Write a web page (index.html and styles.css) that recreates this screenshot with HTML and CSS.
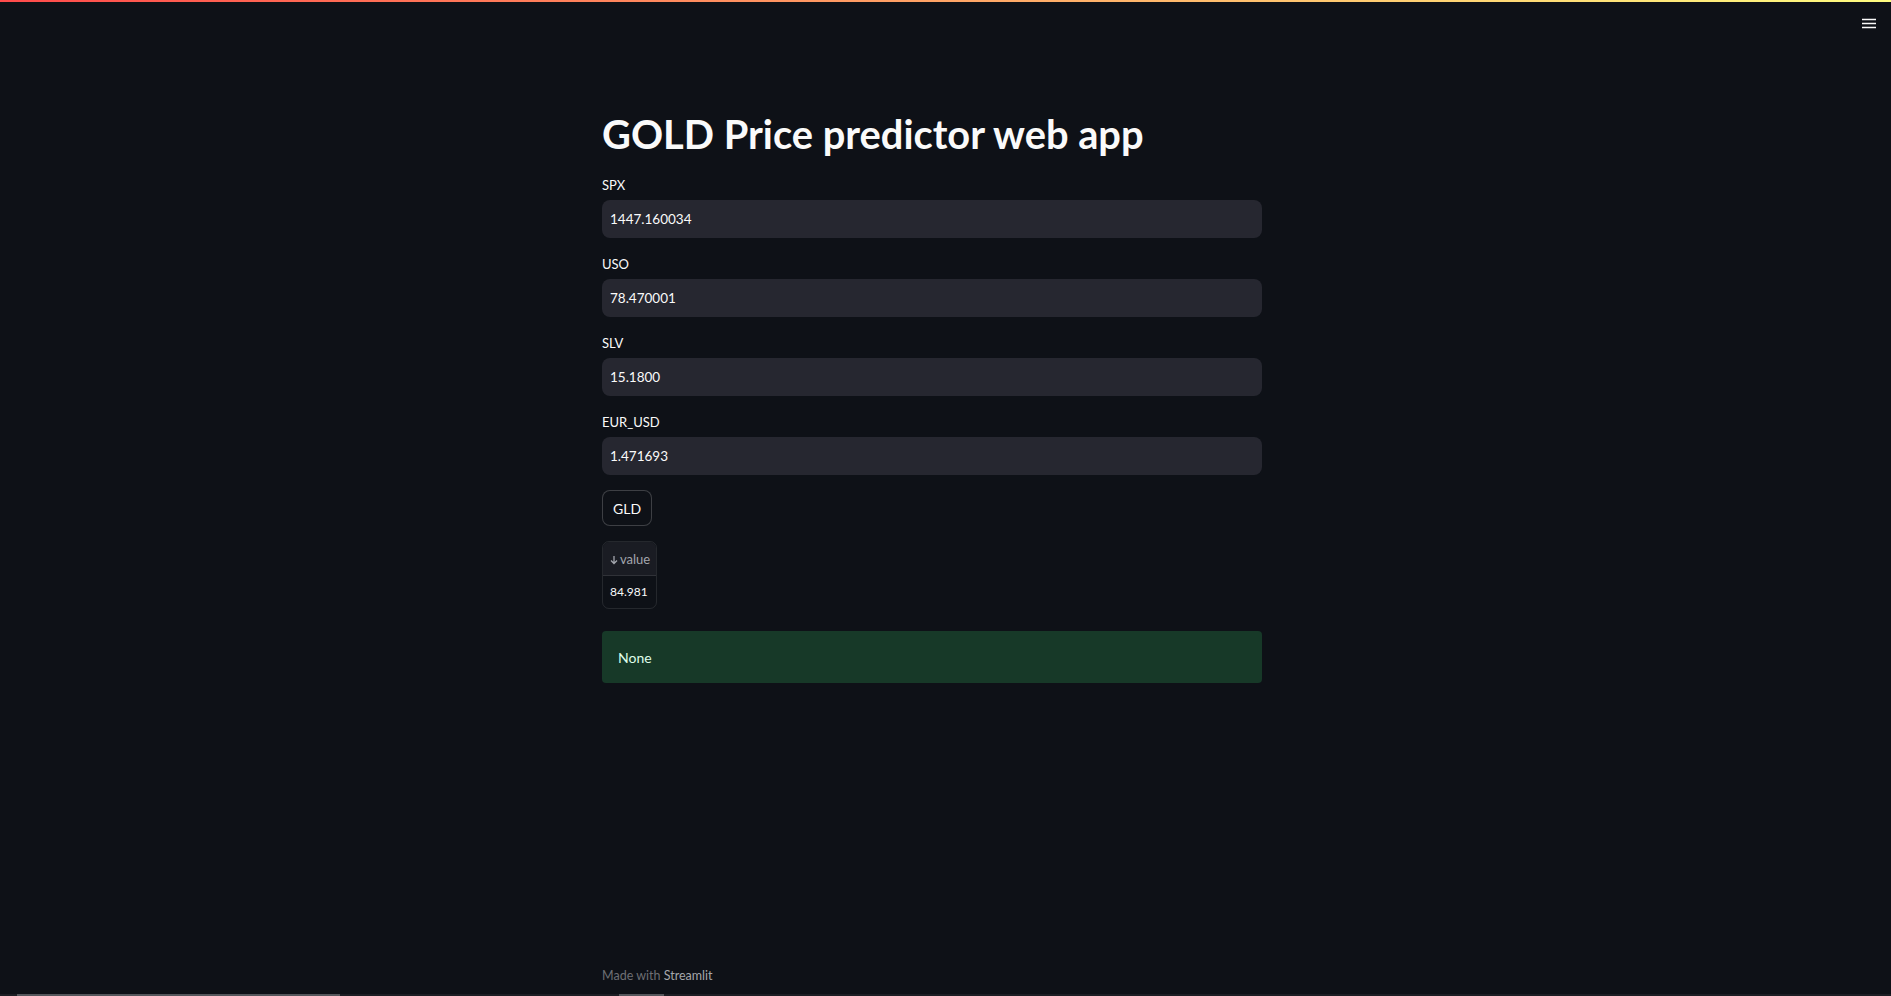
FILE: index.html
```html
<!DOCTYPE html>
<html lang="en">
<head>
<meta charset="utf-8">
<title>GOLD Price predictor web app</title>
<link rel="stylesheet" href="styles.css">
</head>
<body>
<div class="app">
  <div class="decoration"></div>
  <header class="topbar">
    <button class="menu-btn" aria-label="Menu">
      <svg width="16" height="16" viewBox="0 0 16 16"><path d="M1 4.5h14M1 8.5h14M1 12.5h14" stroke="#fafafa" stroke-width="1.6" fill="none"/></svg>
    </button>
  </header>
  <main class="main">
    <h1 class="title">GOLD Price predictor web app</h1>
    <div class="field">
      <label class="field-label">SPX</label>
      <input class="field-input" type="text" value="1447.160034">
    </div>
    <div class="field">
      <label class="field-label">USO</label>
      <input class="field-input" type="text" value="78.470001">
    </div>
    <div class="field">
      <label class="field-label">SLV</label>
      <input class="field-input" type="text" value="15.1800">
    </div>
    <div class="field">
      <label class="field-label">EUR_USD</label>
      <input class="field-input" type="text" value="1.471693">
    </div>
    <button class="btn">GLD</button>
    <div class="df">
      <div class="df-head">
        <svg class="df-arrow" width="8" height="10" viewBox="0 0 8 10"><path d="M4 1v7.5M1 5.5l3 3 3-3" stroke="#a3a6ad" stroke-width="1.3" fill="none"/></svg>
        <span>value</span>
      </div>
      <div class="df-cell">84.981</div>
    </div>
    <div class="alert">None</div>
  </main>
  <footer class="footer">Made with <span class="brand">Streamlit</span></footer>
  <div class="scroll-strip"><span class="thumb thumb-a"></span><span class="thumb thumb-b"></span></div>
</div>
</body>
</html>
```

FILE: styles.css
```css
* { box-sizing: border-box; }

html, body {
  margin: 0;
  padding: 0;
  height: 100%;
  overflow: hidden;
  background: #0e1117;
  color: #fafafa;
  font-family: "Lato", "Open Sans", sans-serif;
}

.app {
  display: flex;
  flex-direction: column;
  height: 100vh;
}

.decoration {
  height: 2px;
  flex: none;
  background: linear-gradient(90deg, rgb(255, 75, 75), rgb(255, 253, 128));
}

.topbar {
  height: 44px;
  flex: none;
  display: flex;
  justify-content: flex-end;
  align-items: flex-start;
  padding: 13px 14px 0 0;
}

.menu-btn {
  background: none;
  border: none;
  padding: 0;
  width: 16px;
  height: 16px;
  display: block;
}
.menu-btn svg { display: block; }

.main {
  flex: 1;
  width: 660px;
  margin-left: 602px;
  padding-top: 63px;
  display: flex;
  flex-direction: column;
  gap: 16px;
}

.title {
  margin: 0 0 1px 0;
  font-size: 39.8px;
  line-height: 49px;
  font-weight: 700;
  color: #fafafa;
  letter-spacing: 0;
}

.field {
  display: flex;
  flex-direction: column;
}

.field-label {
  font-size: 13px;
  line-height: 21px;
  margin-bottom: 4px;
  color: #fafafa;
}

.field-input {
  height: 38px;
  width: 100%;
  border: none;
  border-radius: 8px;
  background: #262730;
  color: #fafafa;
  font-family: inherit;
  font-size: 13.5px;
  padding: 0 8px;
  outline: none;
}

.btn {
  align-self: flex-start;
  height: 36px;
  margin-top: -1px;
  padding: 0 10px;
  background: #0e1117;
  color: #fafafa;
  border: 1px solid rgba(250, 250, 250, 0.2);
  border-radius: 8px;
  font-family: inherit;
  font-size: 14px;
}

.df {
  align-self: flex-start;
  width: 55px;
  margin-top: -1px;
  border: 1px solid rgba(250, 250, 250, 0.1);
  border-radius: 7px;
  overflow: hidden;
}

.df-head {
  height: 34px;
  display: flex;
  align-items: center;
  gap: 2px;
  padding-left: 7px;
  background: #1a1c23;
  border-bottom: 1px solid rgba(250, 250, 250, 0.1);
  color: #a3a6ad;
  font-size: 13px;
}

.df-arrow { display: block; margin-top: 2px; }

.df-cell {
  height: 32px;
  display: flex;
  align-items: center;
  padding-left: 7px;
  padding-bottom: 1px;
  font-size: 12px;
  color: #fafafa;
}

.alert {
  margin-top: 6px;
  height: 52px;
  display: flex;
  align-items: center;
  padding: 0 16px;
  border-radius: 4px;
  background: #173928;
  color: #dffde9;
  font-size: 14px;
}

.footer {
  flex: none;
  margin-left: 602px;
  font-size: 12.5px;
  line-height: 16px;
  padding-bottom: 10px;
  color: #6d6f74;
}

.brand { color: #a5a7ab; }

.scroll-strip {
  flex: none;
  height: 2px;
  display: flex;
  background: #1c1e24;
}

.thumb {
  display: block;
  height: 2px;
  background: #55575c;
}
.thumb-a { margin-left: 17px; width: 323px; }
.thumb-b { margin-left: 279px; width: 45px; }
```
